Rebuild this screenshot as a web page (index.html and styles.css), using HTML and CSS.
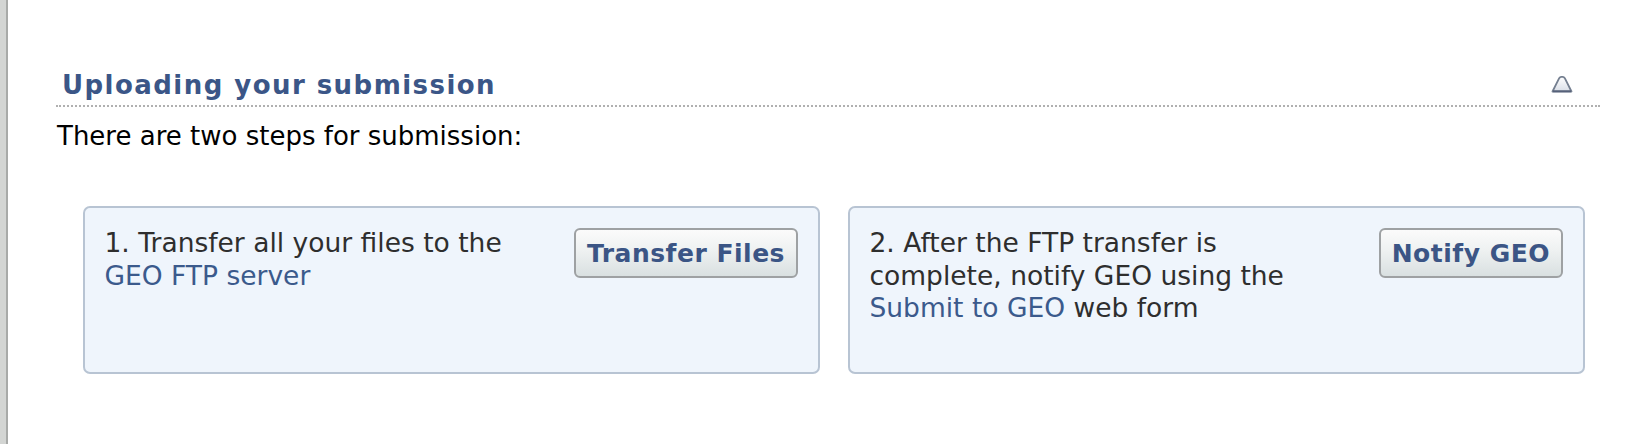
FILE: index.html
```html
<!DOCTYPE html>
<html lang="en">
<head>
<meta charset="utf-8">
<title>Uploading your submission</title>
<link rel="stylesheet" href="styles.css">
</head>
<body>
<div class="frame">
  <div class="rail"></div>
  <main class="content">
    <div class="section-head">
      <h2 class="section-title">Uploading your submission</h2>
      <span class="toggle" aria-label="Collapse">
        <svg width="22" height="18" viewBox="0 0 22 18">
          <defs>
            <linearGradient id="tg" x1="0" y1="0" x2="0" y2="1">
              <stop offset="0" stop-color="#ffffff"/>
              <stop offset="1" stop-color="#d9dee7"/>
            </linearGradient>
          </defs>
          <path d="M1.5 16.5 L8.2 3.2 Q9 1.8 10.2 1.8 L11.8 1.8 Q13 1.8 13.8 3.2 L20.5 16.5 Z" fill="url(#tg)" stroke="#747f90" stroke-width="1.8" stroke-linejoin="round"/>
          <path d="M2 16.3 L20 16.3" stroke="#56617a" stroke-width="1.8"/>
        </svg>
      </span>
    </div>
    <p class="intro">There are two steps for submission:</p>
    <div class="steps">
      <div class="step">
        <p class="step-text">1. Transfer all your files to the <a href="#" class="link">GEO FTP server</a></p>
        <button class="btn" type="button">Transfer Files</button>
      </div>
      <div class="step">
        <p class="step-text">2. After the FTP transfer is complete, notify GEO using the <a href="#" class="link">Submit to GEO</a> web form</p>
        <button class="btn" type="button">Notify GEO</button>
      </div>
    </div>
  </main>
</div>
</body>
</html>
```
FILE: styles.css
```css
html, body {
  margin: 0;
  padding: 0;
  background: #ffffff;
}

body {
  font-family: "DejaVu Sans", Verdana, sans-serif;
  color: #000;
}

.frame {
  display: flex;
  min-height: 444px;
}

.rail {
  width: 6px;
  flex: none;
  background: #d3d5d3;
  border-right: 2px solid #a8aaa8;
}

.content {
  flex: 1;
  padding: 66px 38px 0 48px;
}

.section-head {
  display: flex;
  align-items: flex-start;
  justify-content: space-between;
  border-bottom: 2px dotted #b0b0b0;
  padding: 4px 27px 5px 6px;
}

.section-title {
  margin: 0;
  font-size: 26px;
  line-height: 30px;
  letter-spacing: 1.45px;
  font-weight: bold;
  color: #3b5687;
}

.toggle {
  display: block;
  width: 22px;
  height: 18px;
  margin-top: 5px;
}

.toggle svg {
  display: block;
}

.intro {
  margin: 14px 0 0 1px;
  font-size: 26px;
  line-height: 30px;
  color: #000;
}

.steps {
  display: grid;
  grid-template-columns: 737px 737px;
  column-gap: 28px;
  margin: 55px 0 0 27px;
}

.step {
  box-sizing: border-box;
  height: 168px;
  display: flex;
  justify-content: space-between;
  align-items: flex-start;
  background: #eff5fc;
  border: 2px solid #b8c4d3;
  border-radius: 7px;
  padding: 20px 20px 20px 19.5px;
}

.step-text {
  margin: -1px 0 0 0;
  max-width: 434px;
  font-size: 26.5px;
  line-height: 32.5px;
  color: #2e2e2e;
}

.link {
  color: #3b5a8c;
  text-decoration: none;
}

.btn {
  flex: none;
  height: 50px;
  padding: 0 11px;
  font-family: "DejaVu Sans", Verdana, sans-serif;
  font-size: 25px;
  letter-spacing: 0.5px;
  font-weight: bold;
  color: #3b5585;
  background: linear-gradient(#fbfbfb, #eef1f1 45%, #d9e0e1);
  border: 2px solid #9ea1a3;
  border-radius: 6px;
}
```
